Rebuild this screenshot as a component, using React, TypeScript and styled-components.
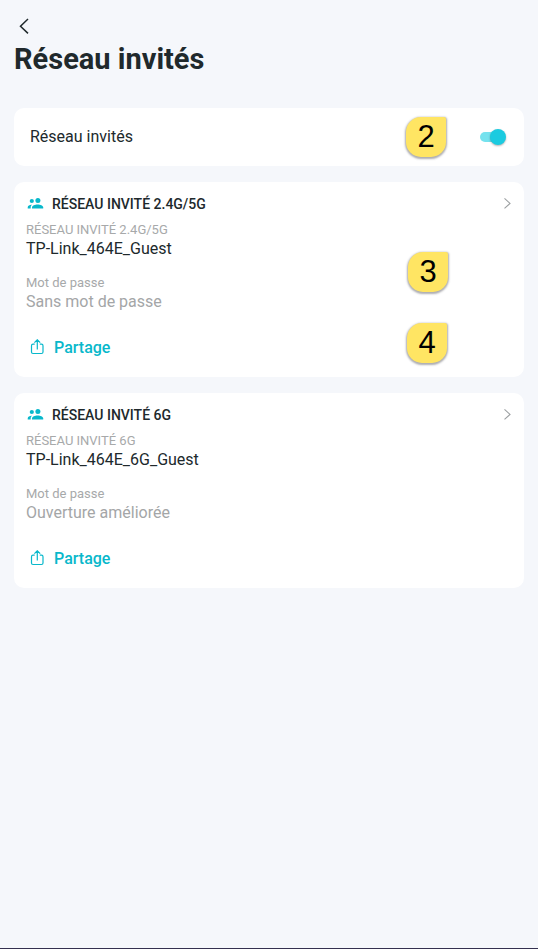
import React, { useState } from "react";
import styled, { createGlobalStyle } from "styled-components";

const GlobalStyle = createGlobalStyle`
  *, *::before, *::after { box-sizing: border-box; }
  body {
    margin: 0;
    background: #f5f7fb;
    color: #20292c;
    font-family: Roboto, "Liberation Sans", sans-serif;
  }
`;

const Page = styled.main`
  display: flex;
  flex-direction: column;
  min-height: 100vh;
  padding: 12px 14px;
  border-bottom: 1px solid #34304f;
`;

const Header = styled.header`
  display: flex;
  flex-direction: column;
  align-items: flex-start;
  margin-bottom: 30px;
`;

const IconButton = styled.button`
  display: flex;
  align-items: center;
  justify-content: center;
  padding: 0;
  border: 0;
  background: none;
  color: inherit;
  cursor: pointer;
`;

const BackButton = styled(IconButton)`
  width: 20px;
  height: 28px;
`;

const Title = styled.h1`
  margin: 0;
  font-size: 29px;
  line-height: 38px;
  font-weight: 700;
`;

const Stack = styled.div`
  display: flex;
  flex-direction: column;
  gap: 16px;
`;

const Card = styled.section`
  position: relative;
  background: #fff;
  border-radius: 10px;
`;

const SwitchCard = styled(Card)`
  display: flex;
  align-items: center;
  justify-content: space-between;
  padding: 17px 18px 17px 16px;
`;

const SwitchLabel = styled.label`
  font-size: 16px;
  line-height: 24px;
`;

const Switch = styled.input`
  appearance: none;
  position: relative;
  width: 26px;
  height: 16px;
  margin: 0;
  cursor: pointer;

  &::before {
    content: "";
    position: absolute;
    inset: 3px 1px 3px 0;
    border-radius: 5px;
    background: #c9cdd2;
  }
  &::after {
    content: "";
    position: absolute;
    top: 0;
    left: 0;
    width: 16px;
    height: 16px;
    border-radius: 50%;
    background: #fff;
    box-shadow: 0 1px 2px rgba(0, 0, 0, 0.3);
  }
  &:checked::before { background: #75e2ee; }
  &:checked::after { left: 10px; background: #1bcbe0; }
`;

const NetworkBody = styled(Card)`
  display: flex;
  flex-direction: column;
  padding: 12px 12px 17px;
`;

const NetworkHead = styled.div`
  display: flex;
  align-items: center;
  height: 20px;
  margin-bottom: 8px;
`;

const NetworkTitle = styled.h2`
  flex: 1;
  margin: 0 0 0 8px;
  font-size: 14px;
  line-height: 20px;
  font-weight: 500;
`;

const ChevronButton = styled(IconButton)`
  width: 10px;
  height: 20px;
  color: #9b9fa1;
`;

const Fields = styled.dl`
  display: flex;
  flex-direction: column;
  gap: 14px;
  margin: 0 0 22px;
`;

const FieldLabel = styled.dt`
  font-size: 13px;
  line-height: 15px;
  color: #a7a9aa;
`;

const FieldValue = styled.dd<{ $muted?: boolean }>`
  margin: 0;
  font-size: 16px;
  line-height: 24px;
  color: ${(p) => (p.$muted ? "#a4a6a7" : "#20292c")};
`;

const ShareButton = styled(IconButton)`
  align-self: flex-start;
  gap: 10px;
  margin-left: 4px;
  color: #08b8cb;
  font-family: inherit;
  font-size: 16px;
  line-height: 24px;
  font-weight: 500;
`;

const Marker = styled.span<{ $top: number; $right: number }>`
  position: absolute;
  top: ${(p) => p.$top}px;
  right: ${(p) => p.$right}px;
  display: flex;
  align-items: center;
  justify-content: center;
  width: 40px;
  height: 40px;
  border-radius: 15px 2px 15px 15px;
  background: #ffe563;
  box-shadow: 0 1px 2px 1px rgba(60, 60, 70, 0.42);
  color: #000;
  font-family: "Liberation Sans", Arial, sans-serif;
  font-size: 31px;
  line-height: 40px;
`;

const Icon = styled.svg`
  display: block;
  flex: none;
  fill: none;
  stroke: currentColor;
`;

const PeopleIcon = () => (
  <Icon width="18" height="14" viewBox="0 0 18 14" aria-hidden="true">
    <g fill="#08b8cb" stroke="none">
      <circle cx="5.8" cy="4" r="2.1" />
      <circle cx="11.9" cy="3.6" r="2.5" />
      <path d="M1.7 11.5v-1c0-2 2-2.8 4.4-2.7-1 .7-1.4 1.6-1.4 2.6v1.1z" />
      <path d="M6 11.5v-1.1c0-2.1 2.8-3 5.6-3s5.6.9 5.6 3v1.1z" />
    </g>
  </Icon>
);

const ShareIcon = () => (
  <Icon width="14" height="18" viewBox="0 0 14 18" aria-hidden="true">
    <path
      d="M4.7 5.2H3Q1.5 5.2 1.5 6.7v6.3q0 1.5 1.5 1.5h8.5q1.5 0 1.5-1.5V6.7q0-1.5-1.5-1.5H9.8M7.3 10.5V1M4.4 3.7l2.9-2.9 2.9 2.9"
      strokeWidth="1.2"
    />
  </Icon>
);

type Note = { text: string; top: number; right: number };

type Network = {
  name: string;
  ssid: string;
  password: string;
  notes: Note[];
};

const networks: Network[] = [
  {
    name: "RÉSEAU INVITÉ 2.4G/5G",
    ssid: "TP-Link_464E_Guest",
    password: "Sans mot de passe",
    notes: [
      { text: "3", top: 70, right: 76 },
      { text: "4", top: 141, right: 77 },
    ],
  },
  {
    name: "RÉSEAU INVITÉ 6G",
    ssid: "TP-Link_464E_6G_Guest",
    password: "Ouverture améliorée",
    notes: [],
  },
];

const NetworkCard = ({ network }: { network: Network }) => (
  <NetworkBody>
    <NetworkHead>
      <PeopleIcon />
      <NetworkTitle>{network.name}</NetworkTitle>
      <ChevronButton type="button" aria-label={network.name}>
        <Icon width="10" height="14" viewBox="0 0 10 14" aria-hidden="true">
          <path d="M2.5 1.4 8 6.4l-5.5 5" strokeWidth="1.1" />
        </Icon>
      </ChevronButton>
    </NetworkHead>
    <Fields>
      <div>
        <FieldLabel>{network.name}</FieldLabel>
        <FieldValue>{network.ssid}</FieldValue>
      </div>
      <div>
        <FieldLabel>Mot de passe</FieldLabel>
        <FieldValue $muted>{network.password}</FieldValue>
      </div>
    </Fields>
    <ShareButton type="button">
      <ShareIcon />
      Partage
    </ShareButton>
    {network.notes.map((note) => (
      <Marker key={note.text} $top={note.top} $right={note.right}>
        {note.text}
      </Marker>
    ))}
  </NetworkBody>
);

export default function App() {
  const [enabled, setEnabled] = useState(true);
  return (
    <>
      <GlobalStyle />
      <Page>
        <Header>
          <BackButton type="button" aria-label="Retour">
            <Icon width="20" height="20" viewBox="0 0 20 20" aria-hidden="true">
              <path d="M14 3 6.5 10.2 14 17.4" strokeWidth="1.5" />
            </Icon>
          </BackButton>
          <Title>Réseau invités</Title>
        </Header>
        <Stack>
          <SwitchCard>
            <SwitchLabel htmlFor="guest-network">Réseau invités</SwitchLabel>
            <Switch
              id="guest-network"
              type="checkbox"
              role="switch"
              checked={enabled}
              onChange={(e) => setEnabled(e.target.checked)}
            />
            <Marker $top={9} $right={78}>2</Marker>
          </SwitchCard>
          {networks.map((network) => (
            <NetworkCard key={network.name} network={network} />
          ))}
        </Stack>
      </Page>
    </>
  );
}
